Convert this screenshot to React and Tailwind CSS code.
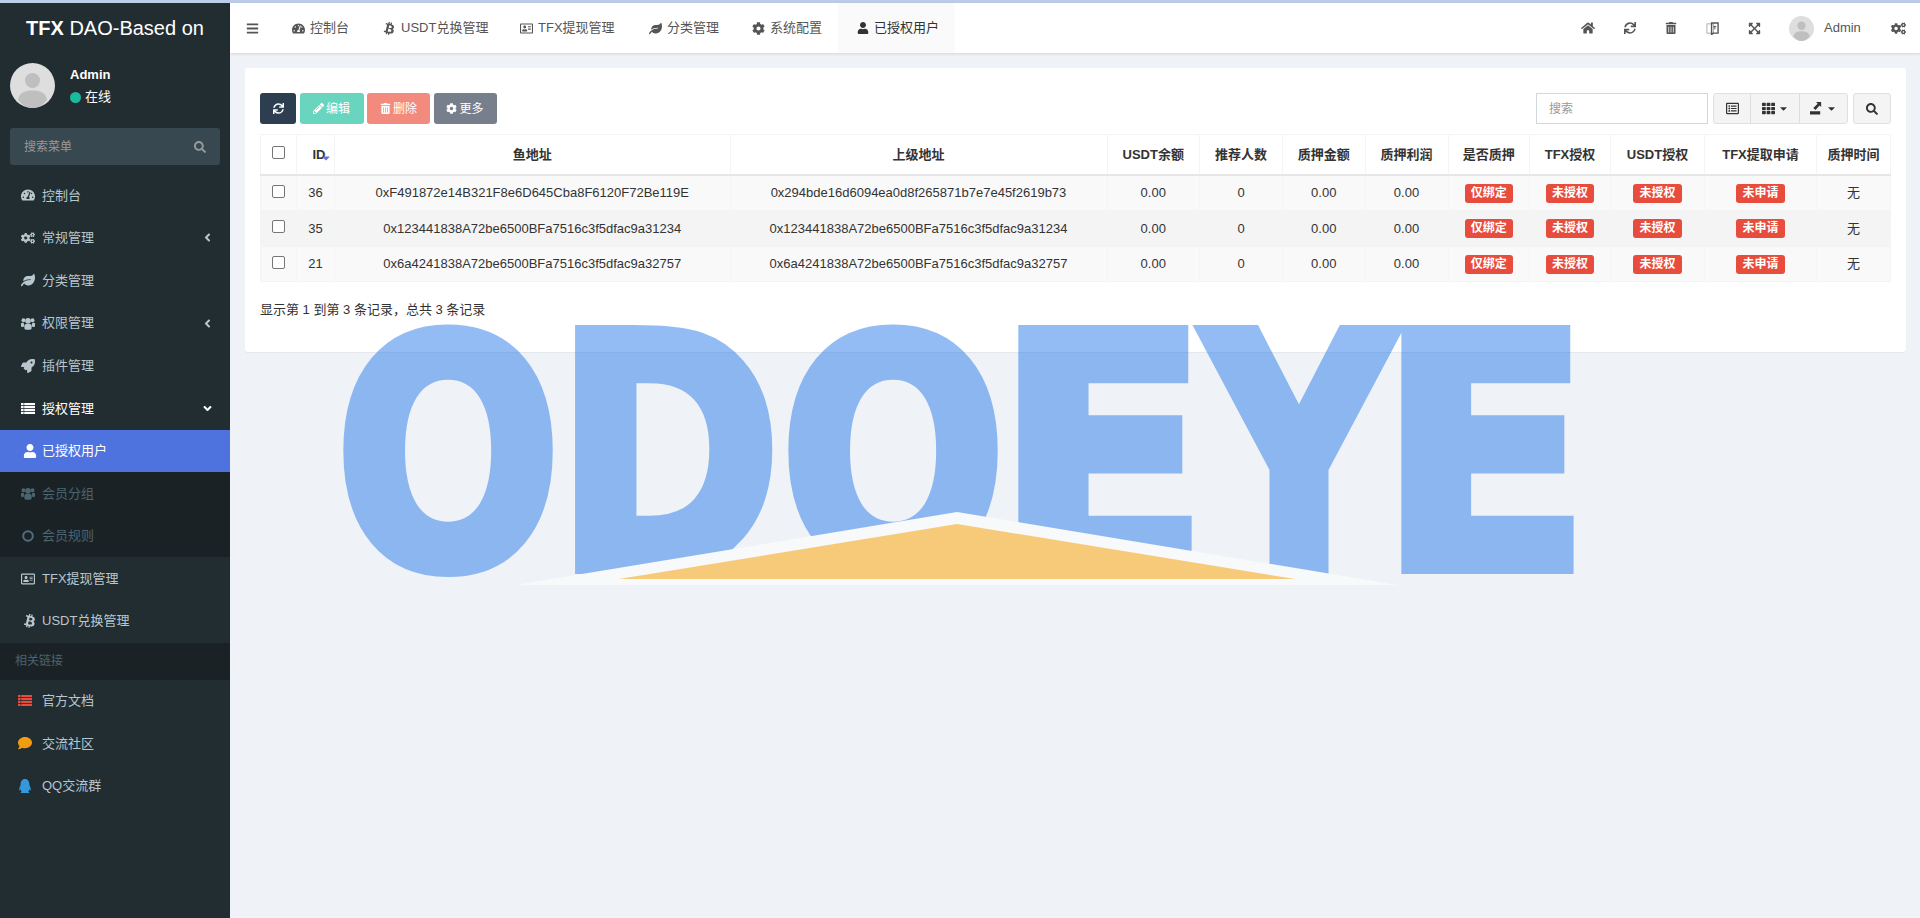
import React from 'react';
import {
  FaTachometerAlt, FaCogs, FaLeaf, FaRocket, FaUser, FaBtc, FaComment, FaQq, FaBars, FaCog, FaHome, FaSync,
  FaTrashAlt, FaExpandArrowsAlt, FaPencilAlt, FaSearch, FaTh, FaCaretDown, FaAngleLeft, FaAngleDown,
  FaRegAddressCard, FaRegListAlt,
} from 'react-icons/fa';

const FONT = 'font-["Liberation_Sans","Noto_Sans_CJK_SC",sans-serif]';

// Default user picture
const Avatar = ({ className }) => (
  <svg viewBox="0 0 45 45" className={className}>
    <circle cx="22.5" cy="22.5" r="22.5" fill="#dedede" />
    <circle cx="22.500" cy="17.5" r="7.5" fill="#bfbfbf" />
    <path d="M8 37c1-8 8-9.500 14.500-9.500S36 29 37 37c-4 5-9 8-14.500 8S12 42 8 37z" fill="#bfbfbf" />
  </svg>
);

const UsersIcon = ({ className }) => (
  <svg viewBox="0 0 16 14" fill="currentColor" className={`h-[13px] w-[14px] ${className || ''}`}>
    <circle cx="8" cy="4" r="3.2" />
    <circle cx="2.800" cy="3.300" r="2.200" />
    <circle cx="13.200" cy="3.300" r="2.200" />
    <rect x="3.800" y="7.500" width="8.400" height="6.500" rx="2" />
    <rect x="0" y="6" width="3.400" height="5" rx="1.200" />
    <rect x="12.600" y="6" width="3.400" height="5" rx="1.200" />
  </svg>
);

const ListIcon = ({ className }) => (
  <svg viewBox="0 0 14 11" fill="currentColor" className={`h-[11px] w-[14px] ${className || ''}`}>
    {[0, 3, 6, 9].map((y) => (
      <g key={y}>
        <rect x="0" y={y} width="2.600" height="2.200" />
        <rect x="3.200" y={y} width="10.800" height="2.200" />
      </g>
    ))}
  </svg>
);

const CircleIcon = ({ className }) => (
  <svg viewBox="0 0 12 12" fill="none" stroke="#4f6f80" strokeWidth="2" className={`ml-[1px] h-[12px] w-[12px] ${className || ''}`}>
    <circle cx="6" cy="6" r="4.800" />
  </svg>
);

const UprightBtc = ({ className }) => <FaBtc className={`rotate-[14deg] ${className || ''}`} />;

const LanguageIcon = ({ className }) => (
  <svg viewBox="0 0 14 14" className={`h-[13px] w-[13px] ${className || ''}`}>
    <rect x="1" y="2" width="7" height="10" fill="none" stroke="#aaa" strokeWidth="1" />
    <path d="M6 1h7v11H8l-2 1.500z" fill="none" stroke="#555" strokeWidth="1.500" />
    <path d="M8 5h3M9.500 4v4" stroke="#555" strokeWidth="1" />
  </svg>
);

const menu = [
  { icon: FaTachometerAlt, label: '控制台' },
  { icon: FaCogs, label: '常规管理', arrow: true },
  { icon: FaLeaf, label: '分类管理' },
  { icon: UsersIcon, label: '权限管理', arrow: true },
  { icon: FaRocket, label: '插件管理' },
];

const subMenu = [
  { icon: UsersIcon, label: '会员分组' },
  { icon: CircleIcon, label: '会员规则' },
];

const links = [
  { icon: ListIcon, label: '官方文档', color: 'text-[#e74c3c]' },
  { icon: FaComment, label: '交流社区', color: 'text-[#f39c12]' },
  { icon: FaQq, label: 'QQ交流群', color: 'text-[#3498db]' },
];

const MenuItem = ({ icon: Icon, label, arrow, className = 'text-[#b8c7ce]', iconClass = '', children }) => (
  <a className={`flex h-[42.6px] items-center pl-[21px] pr-[16px] text-[13px] ${className}`}>
    <span className={`flex w-[21px] shrink-0 justify-start ${iconClass}`}>
      <Icon className="text-[14px]" />
    </span>
    <span className="flex-1">{label}</span>
    {arrow && <FaAngleLeft className="text-[13px]" />}
    {children}
  </a>
);

const Sidebar = () => (
  <aside className="flex w-[230px] shrink-0 flex-col bg-[#222d32]">
    <div className="flex h-[50px] items-center justify-center text-[20px] text-white">
      <b>TFX</b>&nbsp;DAO-Based on
    </div>
    <div className="flex h-[75px] items-start px-[10px] pt-[10px]">
      <Avatar className="h-[45px] w-[45px]" />
      <div className="ml-[15px] pt-[3px] text-[13px] leading-[18px] text-white">
        <div className="font-bold">Admin</div>
        <div className="mt-[4px] flex items-center">
          <span className="mr-[4px] h-[11px] w-[11px] rounded-full bg-[#18bc9c]" />
          在线
        </div>
      </div>
    </div>
    <div className="mx-[10px] flex h-[37px] items-center justify-between rounded-[3px] bg-[#374850] pl-[14px] pr-[14px] text-[12px] text-[#999]">
      搜索菜单
      <FaSearch className="text-[12px]" />
    </div>
    <nav className="mt-[9px]">
      {menu.map((item) => (
        <MenuItem key={item.label} {...item} />
      ))}
      <MenuItem icon={ListIcon} label="授权管理" className="text-white">
        <FaAngleDown className="text-[13px]" />
      </MenuItem>
      <MenuItem icon={FaUser} label="已授权用户" className="bg-[#4e73df] text-white" iconClass="pl-[2px]" />
      <div className="bg-[#1a2226]">
        {subMenu.map((item) => (
          <MenuItem key={item.label} {...item} className="text-[#4b646f]" />
        ))}
      </div>
      <MenuItem icon={FaRegAddressCard} label="TFX提现管理" />
      <MenuItem icon={UprightBtc} label="USDT兑换管理" iconClass="pl-[2px]" />
      <div className="flex h-[37px] items-center bg-[#1a2226] pl-[15px] text-[12px] text-[#4b646f]">相关链接</div>
      {links.map((item) => (
        <MenuItem key={item.label} icon={item.icon} label={item.label} iconClass={`-ml-[3px] mr-[3px] ${item.color}`} />
      ))}
    </nav>
  </aside>
);

const tabs = [
  { icon: FaTachometerAlt, label: '控制台', w: 'w-[91px]' },
  { icon: UprightBtc, label: 'USDT兑换管理', w: 'w-[137px]' },
  { icon: FaRegAddressCard, label: 'TFX提现管理', w: 'w-[129px]' },
  { icon: FaLeaf, label: '分类管理', w: 'w-[103px]' },
  { icon: FaCog, label: '系统配置', w: 'w-[103px]' },
];

const Navbar = () => (
  <header className="flex h-[50px] items-center bg-white text-[13px] text-[#555] shadow-[0_1px_3px_rgba(0,0,0,0.12)]">
    <div className="flex w-[45px] justify-center">
      <FaBars className="text-[13px]" />
    </div>
    {tabs.map(({ icon: Icon, label, w }) => (
      <div key={label} className={`flex h-full items-center pl-[17px] ${w}`}>
        <span className="w-[18px]"><Icon className="text-[13px]" /></span>
        {label}
      </div>
    ))}
    <div className="flex h-full w-[117px] items-center bg-[#fafafa] pl-[19px] text-[#333]">
      <span className="w-[17px]"><FaUser className="text-[12px]" /></span>
      已授权用户
    </div>
    <div className="ml-auto flex h-full items-center pr-[15px]">
      <div className="flex items-center gap-[29px] pr-[28px]">
        <FaHome className="text-[14px]" />
        <FaSync className="text-[12px]" />
        <FaTrashAlt className="text-[12px]" />
        <LanguageIcon />
        <FaExpandArrowsAlt className="text-[13px]" />
      </div>
      <Avatar className="h-[25px] w-[25px]" />
      <span className="ml-[10px] w-[67px]">Admin</span>
      <FaCogs className="text-[15px]" />
    </div>
  </header>
);

const ToolButton = ({ className, children }) => (
  <button className={`flex h-[31px] items-center justify-center gap-[2px] rounded-[3px] text-[12px] text-white ${className}`}>
    {children}
  </button>
);

const Toolbar = () => (
  <div className="flex h-[31px] items-center justify-between">
    <div className="flex gap-[3.5px]">
      <ToolButton className="w-[36px] bg-[#2c3e50]"><FaSync className="text-[11px]" /></ToolButton>
      <ToolButton className="w-[64px] bg-[#6ad5bf]"><FaPencilAlt className="text-[11px]" />编辑</ToolButton>
      <ToolButton className="w-[63px] bg-[#f28a7e]"><FaTrashAlt className="text-[11px]" />删除</ToolButton>
      <ToolButton className="w-[63px] bg-[#767f8b]"><FaCog className="text-[11px]" />更多</ToolButton>
    </div>
    <div className="flex items-center text-[#333]">
      <div className="mr-[5px] flex h-[31px] w-[172px] items-center border border-[#d2d6de] pl-[12px] text-[12px] text-[#999]">搜索</div>
      <div className="flex h-[31px] rounded-[3px] border border-[#e0e0e0] bg-[#f4f4f4]">
        <div className="flex w-[37px] items-center justify-center border-r border-[#ddd]"><FaRegListAlt className="text-[13px]" /></div>
        <div className="flex w-[49px] items-center justify-center gap-[3px] border-r border-[#ddd]"><FaTh className="text-[13px]" /><FaCaretDown className="text-[11px]" /></div>
        <div className="flex w-[47px] items-center justify-center gap-[3px]">
          <svg viewBox="0 0 14 14" className="h-[13px] w-[13px]" fill="currentColor">
            <path d="M0 10h11v3.500H0zM6.500 0H12v5.500l-1.800-1.800L6 8.500 3.500 6.500 8.300 1.800z" />
          </svg>
          <FaCaretDown className="text-[11px]" />
        </div>
      </div>
      <div className="ml-[5px] flex h-[31px] w-[38px] items-center justify-center rounded-[3px] border border-[#e0e0e0] bg-[#f4f4f4]"><FaSearch className="text-[12px]" /></div>
    </div>
  </div>
);

const columns = [
  ['w-[36px]', null],
  ['w-[38px]', 'ID'],
  ['w-[395.5px]', '鱼地址'],
  ['w-[377px]', '上级地址'],
  ['w-[92.5px]', 'USDT余额'],
  ['w-[83px]', '推荐人数'],
  ['w-[82.5px]', '质押金额'],
  ['w-[83px]', '质押利润'],
  ['w-[81.5px]', '是否质押'],
  ['w-[81px]', 'TFX授权'],
  ['w-[94px]', 'USDT授权'],
  ['w-[112px]', 'TFX提取申请'],
  ['w-[74px]', '质押时间'],
];

const rows = [
  { id: 36, addr: '0xF491872e14B321F8e6D645Cba8F6120F72Be119E', parent: '0x294bde16d6094ea0d8f265871b7e7e45f2619b73', bg: 'bg-[#f9f9f9]' },
  { id: 35, addr: '0x123441838A72be6500BFa7516c3f5dfac9a31234', parent: '0x123441838A72be6500BFa7516c3f5dfac9a31234', bg: 'bg-[#f4f4f4]' },
  { id: 21, addr: '0x6a4241838A72be6500BFa7516c3f5dfac9a32757', parent: '0x6a4241838A72be6500BFa7516c3f5dfac9a32757', bg: 'bg-[#f9f9f9]' },
];

const Check = () => (
  <span className="mb-[5px] inline-block h-[13px] w-[13px] rounded-[2px] border border-[#767676] bg-white align-middle" />
);

const Label = ({ children }) => (
  <span className="inline-block rounded-[3px] bg-[#e74c3c] px-[6px] py-[2px] text-[12px] font-bold leading-[15px] text-white">{children}</span>
);

const Cell = ({ children }) => <td className="border border-[#f4f4f4] p-0 text-center">{children}</td>;

const UserTable = () => (
  <table className="mt-[10px] w-full table-fixed border-collapse text-[13px] text-[#333]">
    <colgroup>
      {columns.map(([w], i) => <col key={i} className={w} />)}
    </colgroup>
    <thead>
      <tr className="h-[40.5px] border-b-2 border-[#e6e6e6]">
        {columns.map(([, title], i) => (
          <th key={i} className="relative border border-[#f4f4f4] p-0 text-center text-[13px] font-bold">
            {i === 0 ? <Check /> : title === 'ID' ? <span className="pl-[7px]">ID</span> : title}
            {title === 'ID' && <FaCaretDown className="absolute left-[23px] top-[17px] text-[12px] text-[#6672d8]" />}
          </th>
        ))}
      </tr>
    </thead>
    <tbody>
      {rows.map((r) => (
        <tr key={r.id} className={`h-[35.5px] ${r.bg}`}>
          <Cell><Check /></Cell>
          <Cell>{r.id}</Cell>
          <Cell>{r.addr}</Cell>
          <Cell>{r.parent}</Cell>
          <Cell>0.00</Cell>
          <Cell>0</Cell>
          <Cell>0.00</Cell>
          <Cell>0.00</Cell>
          <Cell><Label>仅绑定</Label></Cell>
          <Cell><Label>未授权</Label></Cell>
          <Cell><Label>未授权</Label></Cell>
          <Cell><Label>未申请</Label></Cell>
          <Cell>无</Cell>
        </tr>
      ))}
    </tbody>
  </table>
);

// Watermark stamped over the page: letters are live text, squeezed to the logo's boxes.
// fit = glyph width / advance, lsb = left bearing / advance for the font used
const STROKE = 12;
const letters = [
  { ch: 'O', x: 342, w: 212, fit: 0.885, lsb: 0.057, size: 318, y: 566.5 },
  { ch: 'D', x: 574, w: 199, fit: 0.826, lsb: 0.11, size: 325, y: 568 },
  { ch: 'O', x: 787, w: 212, fit: 0.885, lsb: 0.057, size: 318, y: 566.5 },
  { ch: 'E', x: 1018, w: 172, fit: 0.75, lsb: 0.134, size: 325, y: 568 },
  { ch: 'Y', x: 1198, w: 202, fit: 1, lsb: 0, size: 325, y: 568 },
  { ch: 'E', x: 1401, w: 171, fit: 0.75, lsb: 0.134, size: 325, y: 568 },
];

const Watermark = () => (
  <svg viewBox="0 0 1920 918" className="pointer-events-none absolute left-0 top-0 h-[918px] w-[1920px]">
    <g opacity="0.5">
      {letters.map((l, i) => {
        const len = (l.w - STROKE) / l.fit;
        return (
          <text
            key={i}
            x={l.x + STROKE / 2 - l.lsb * len}
            y={l.y}
            textLength={len}
            lengthAdjust="spacingAndGlyphs"
            fontFamily="DejaVu Sans"
            fontWeight="bold"
            fontSize={l.size}
            fill="#297beb"
            stroke="#297beb"
            strokeWidth={STROKE}
            strokeLinejoin="miter"
          >
            {l.ch}
          </text>
        );
      })}
      <polygon points="515,585 957,512 1398,585" fill="#ffffff" />
      <polygon points="619,579 957,524 1295,579" fill="#ffa300" />
    </g>
  </svg>
);

export default function App() {
  return (
    <div className={`relative h-[918px] w-[1920px] overflow-hidden bg-[#eff3f7] ${FONT}`}>
      <div className="h-[3px] bg-[#bccde8]" />
      <div className="flex h-[915px]">
        <Sidebar />
        <main className="flex-1">
          <Navbar />
          <div className="px-[15px] pt-[15px]">
            <section className="h-[284px] rounded-[3px] bg-white px-[15px] pt-[25px] shadow-[0_1px_1px_rgba(0,0,0,0.05)]">
              <Toolbar />
              <UserTable />
              <p className="mt-[18px] text-[13px] text-[#333]">显示第 1 到第 3 条记录，总共 3 条记录</p>
            </section>
          </div>
        </main>
      </div>
      <Watermark />
    </div>
  );
}
